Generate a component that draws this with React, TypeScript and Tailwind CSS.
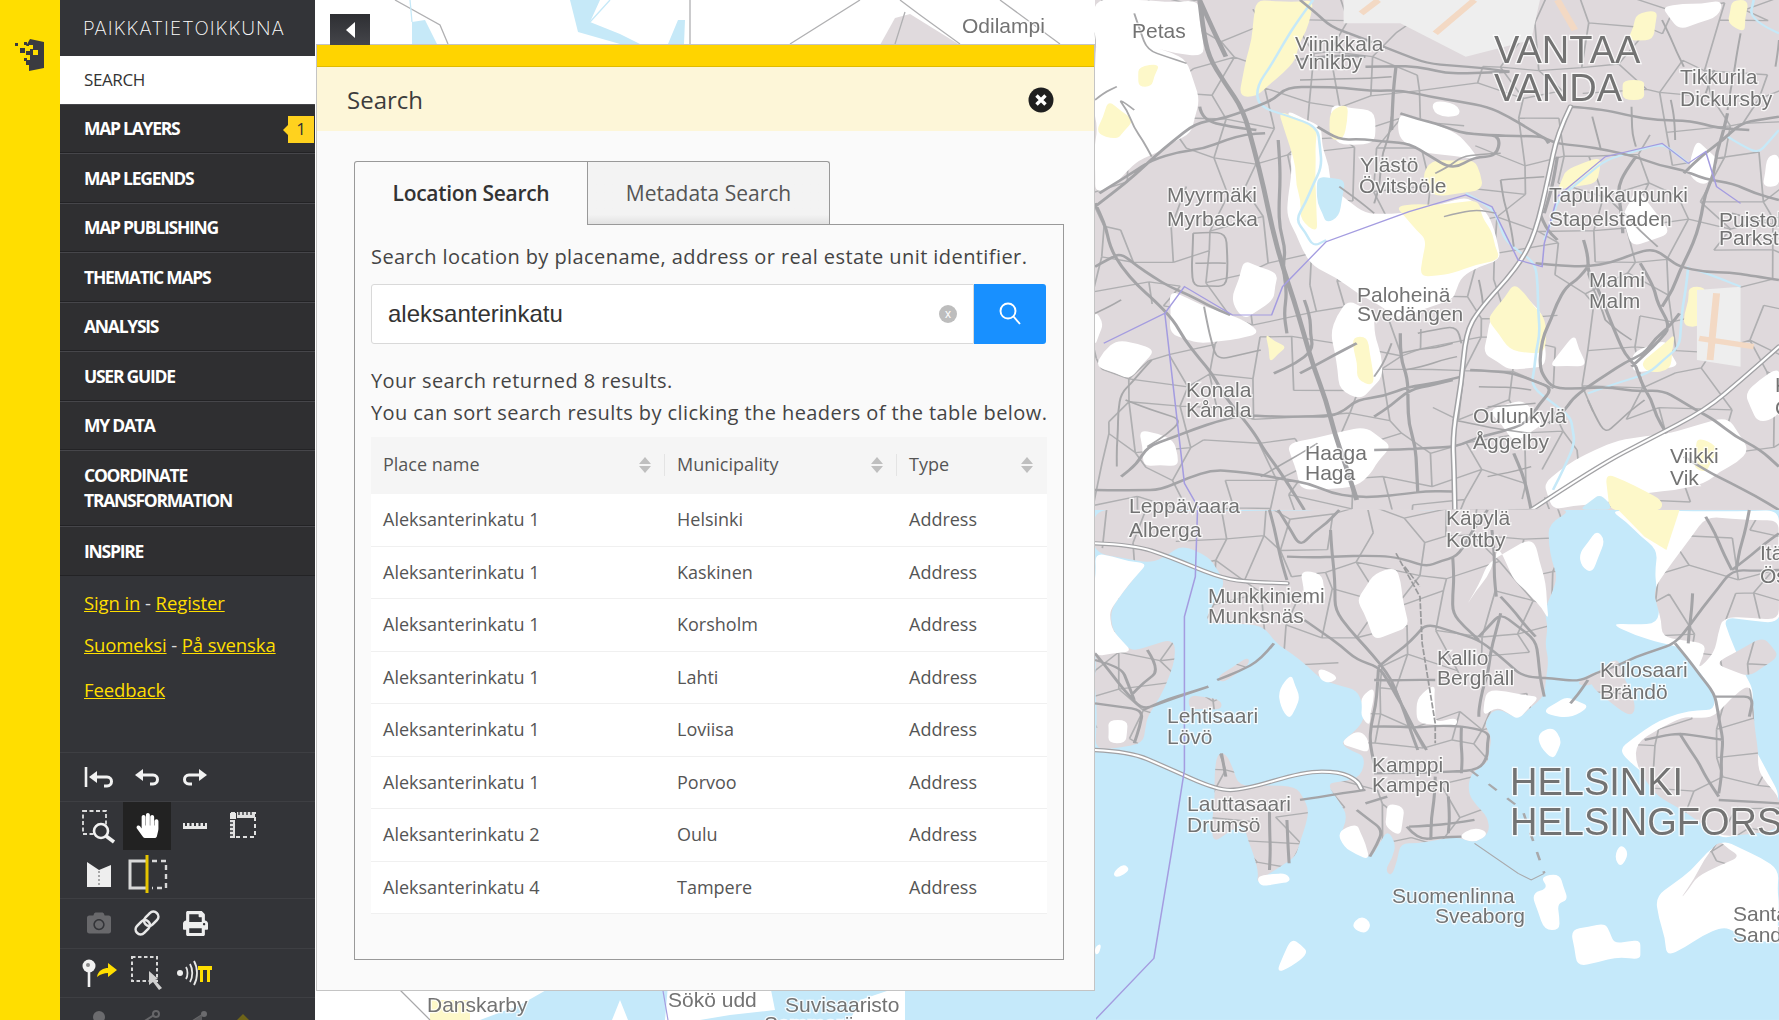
import { FaHandPaper, FaCamera, FaPrint } from "react-icons/fa";

const open = "font-['Open_Sans',sans-serif]";

const labels: [string, number, number, number?][] = [
  ["Odilampi", 962, 33], ["Danskarby", 427, 1012], ["Sökö udd", 668, 1007], ["Suvisaaristo", 785, 1012], ["Sommaröarna", 764, 1031],
  ["Petas", 1132, 38], ["Viinikkala", 1295, 51], ["Vinikby", 1295, 69], ["VANTAA", 1494, 63, 38], ["VANDA", 1494, 101, 38],
  ["Tikkurila", 1680, 84], ["Dickursby", 1680, 106], ["Ylästö", 1360, 172], ["Övitsböle", 1359, 193], ["Myyrmäki", 1167, 202], ["Myrbacka", 1167, 226],
  ["Tapulikaupunki", 1549, 202], ["Stapelstaden", 1549, 226], ["Puistola", 1719, 227], ["Parkstad", 1719, 245], ["Malmi", 1589, 287], ["Malm", 1589, 308],
  ["Paloheinä", 1357, 302], ["Svedängen", 1357, 321], ["Konala", 1186, 397], ["Kånala", 1186, 417], ["Oulunkylä", 1473, 423], ["Åggelby", 1473, 449],
  ["Haaga", 1305, 460], ["Haga", 1305, 480], ["Viikki", 1670, 463], ["Vik", 1670, 485], ["Leppävaara", 1129, 513], ["Alberga", 1129, 537],
  ["Käpylä", 1446, 525], ["Kottby", 1446, 547], ["Munkkiniemi", 1208, 603], ["Munksnäs", 1208, 623], ["Kallio", 1437, 665], ["Berghäll", 1437, 685],
  ["Kulosaari", 1600, 677], ["Brändö", 1600, 699], ["Lehtisaari", 1167, 723], ["Lövö", 1167, 744], ["Kamppi", 1372, 772], ["Kampen", 1372, 792],
  ["Lauttasaari", 1187, 811], ["Drumsö", 1187, 832], ["HELSINKI", 1510, 795, 38], ["HELSINGFORS", 1510, 835, 38], ["Suomenlinna", 1392, 903], ["Sveaborg", 1435, 923],
  ["Santa", 1733, 921], ["Sand", 1733, 942], ["Itä", 1760, 560], ["Ös", 1760, 583], ["K", 1775, 392], ["O", 1775, 415],
];

let seed = 12345;
const rnd = () => {
  seed = (seed + 0x6d2b79f5) | 0;
  let t = Math.imul(seed ^ (seed >>> 15), 1 | seed);
  t = (t + Math.imul(t ^ (t >>> 7), 61 | t)) ^ t;
  return ((t ^ (t >>> 14)) >>> 0) / 4294967296;
};
const f = (n: number) => n.toFixed(1);
function organic(d: string, amp = 7, step = 70) {
  return d
    .split(/(?=M)/)
    .filter((s) => s.trim())
    .map((sub) => {
      const closed = /Z\s*$/.test(sub);
      const nums = sub.match(/-?\d+(\.\d+)?/g)!.map(Number);
      const pts: [number, number][] = [];
      for (let i = 0; i + 1 < nums.length; i += 2) pts.push([nums[i], nums[i + 1]]);
      if (pts.length < 2) return "";
      const out: [number, number][] = [];
      const n = closed ? pts.length : pts.length - 1;
      for (let i = 0; i < n; i++) {
        const a = pts[i];
        const b = pts[(i + 1) % pts.length];
        out.push(a);
        const len = Math.hypot(b[0] - a[0], b[1] - a[1]);
        const k = Math.floor(len / step);
        for (let j = 1; j <= k; j++) {
          const u = j / (k + 1);
          out.push([a[0] + (b[0] - a[0]) * u + (rnd() - 0.5) * 2 * amp, a[1] + (b[1] - a[1]) * u + (rnd() - 0.5) * 2 * amp]);
        }
      }
      if (!closed) out.push(pts[pts.length - 1]);
      const mid = (p: [number, number], q: [number, number]) => `${f((p[0] + q[0]) / 2)},${f((p[1] + q[1]) / 2)}`;
      let s = "";
      if (closed) {
        s = `M${mid(out[out.length - 1], out[0])}`;
        out.forEach((p, i) => (s += ` Q${f(p[0])},${f(p[1])} ${mid(p, out[(i + 1) % out.length])}`));
        s += "Z";
      } else {
        s = `M${f(out[0][0])},${f(out[0][1])}`;
        for (let i = 1; i < out.length - 1; i++) s += ` Q${f(out[i][0])},${f(out[i][1])} ${mid(out[i], out[i + 1])}`;
        s += ` L${f(out[out.length - 1][0])},${f(out[out.length - 1][1])}`;
      }
      return s;
    })
    .join(" ");
}
function mesh(w: number, h: number, cx: number, cy: number, prob: number) {
  const cols = Math.ceil(w / cx) + 1;
  const rows = Math.ceil(h / cy) + 1;
  const p: [number, number][][] = [];
  for (let j = 0; j < rows; j++) {
    p.push([]);
    for (let i = 0; i < cols; i++) p[j].push([i * cx + (rnd() - 0.5) * cx * 0.8, j * cy + (rnd() - 0.5) * cy * 0.8]);
  }
  let d = "";
  for (let j = 0; j < rows; j++)
    for (let i = 0; i < cols; i++) {
      const a = p[j][i];
      if (i + 1 < cols && rnd() < prob) d += `M${f(a[0])},${f(a[1])} L${f(p[j][i + 1][0])},${f(p[j][i + 1][1])} `;
      if (j + 1 < rows && rnd() < prob) d += `M${f(a[0])},${f(a[1])} L${f(p[j + 1][i][0])},${f(p[j + 1][i][1])} `;
    }
  return d;
}

const Z5Roads = organic("M0,620 L230,370 L370,320 L440,262 L700,270 L900,320 L1050,430 L1240,470 L1568,600 M0,800 L60,760 L170,860 L310,945 M0,610 L60,800 L180,960 L330,1240 L480,1530 M240,320 L245,360 L370,390 M10,580 L130,480 L300,420 L390,400 M850,400 L1030,410 L1040,430 M700,340 L780,370 L850,400 L930,410 L920,470 L870,470 L820,510 L720,430 L560,420 L510,380 M690,200 L680,390 M620,200 L740,200 L820,220 L950,215 M460,180 L620,170 M1060,470 L1030,640 M1240,470 L1200,560 L1210,700 M1568,840 L1340,800 L1280,745 L1130,800 L1010,790 M1130,800 L1080,860 L1030,1000 L1020,1100 L1050,1165 L1300,1170 L1420,1260 L1568,1400 M840,1130 L600,1200 L540,1250 L340,1245 L120,1340 L60,1430 M860,1110 L960,1120 L1050,1165 L990,1270 L830,1340 L640,1350 M0,1470 L150,1470 L270,1410 L440,1440 L590,1490 L820,1475 M1340,940 L1260,1060 L1130,1160 L1040,1270 M1450,340 L1380,700 L1300,920 M1568,350 L1480,370 L1440,420 L1350,520 M1090,320 L1500,390 M420,420 L440,1000 M700,1000 L740,1480 M820,1140 L720,1170 L640,1250 M480,900 L500,1050 L410,1120 M470,1120 L600,1030 M1250,790 L1320,980 L1230,1100 M1120,720 L1130,820 L1200,1020 L1240,1100 M1240,1100 L1310,1300 M1020,640 L1060,720 M1350,1370 L1568,1530 M1000,1530 L960,1360");

const Z5Thin = organic("M700,1060 L820,1030 M710,1110 L830,1070 M740,1000 L830,980 L840,1030 M225,700 L300,700 L300,860 L225,860 L225,700 M230,790 L300,790 M130,1080 L60,1180 L50,1400 M250,920 L280,1080 L380,1050 M880,840 L890,920 M930,540 L960,740 M1180,600 L1290,740 M1170,960 L1130,820 M1170,960 L1230,1020 M680,1030 L640,1130 M800,650 L880,630 L920,640 M780,520 L840,470 L930,460 M930,540 L1030,530 M880,1160 L1000,1170 M900,1220 L1010,1210 M1130,1200 L1170,1300 L1260,1200 M1480,100 L1450,330 M1300,60 L1350,200 M1140,350 L1160,450 M1230,320 L1240,440 M1320,300 L1330,420 M560,560 L640,640 M1460,640 L1568,680 M1560,200 L1568,120 M1420,210 L1400,280 M70,1200 L200,1260 L120,1340 M380,1430 L510,1330 M900,1430 L1000,1400 M820,1260 L1000,1300 M0,300 L50,260 M90,40 L120,150 L210,190 M90,330 L50,290 L130,470 M0,940 L60,900 M680,350 L640,610 M470,240 L680,230", 5, 60);

const Z6Roads = organic("M0,430 L80,560 L110,600 L260,530 M0,580 L110,600 L90,700 M440,210 L400,0 M440,140 L680,140 L760,170 L830,140 L900,0 M540,60 L550,300 L620,410 L680,510 L740,720 M420,0 L470,110 L560,0 M480,330 L600,450 L650,470 L710,600 L760,720 M650,470 L630,700 L640,760 M650,470 L710,410 L760,340 L880,390 L980,500 L1110,515 L1240,440 L1330,400 L1460,180 L1568,180 M880,380 L930,310 L1010,390 L1030,560 M930,260 L1010,380 M820,140 L820,310 L880,390 M910,60 L920,260 M930,310 L880,600 L880,620 M640,510 L780,510 M630,650 L840,650 M840,650 L905,660 L900,740 L880,780 L640,790 M840,650 L840,790 M720,950 L870,930 M715,950 L740,990 L840,980 M780,800 L770,990 M810,860 L810,970 M620,880 L670,860 M600,900 L660,960 L630,1040 M470,870 L620,840 M1330,400 L1420,550 L1440,690 L1430,850 M1360,400 L1370,250 M1420,560 L1510,560 L1500,620 M1460,180 L1400,20 M1460,180 L1568,70 M1260,690 L1340,670 L1440,690 M1340,670 L1400,800 L1430,860 M1430,870 L1568,880 M1130,510 L1090,580 M410,400 L380,450 L280,510 M110,600 L160,570 L260,530 M0,450 L60,470 L90,570 M120,420 L150,480 L80,560 M400,900 L400,1080 M440,930 L445,1060 M290,730 L300,800 M1500,0 L1470,180", 4, 70);

const z5White = organic("M0,0 L240,0 L250,170 L130,140 L210,180 L240,300 L220,400 L100,480 L40,560 L0,580Z M440,330 L520,380 L540,560 L620,640 L700,640 L850,590 L900,640 L930,780 L840,830 L820,900 L700,960 L600,880 L500,800 L440,650 L460,400Z M540,310 L640,330 L640,430 L550,430Z M700,340 L830,400 L880,480 L760,460 L700,420Z M170,870 L300,940 L380,1000 L240,1030 L170,1000Z M340,780 L420,820 L410,900 L340,960 L310,900Z M50,1020 L140,1050 L80,1140 L0,1100Z M440,1330 L620,1280 L680,1340 L600,1460 L470,1470Z M580,900 L640,940 L660,1130 L610,1200 L560,1170 L540,1000Z M1100,1380 L1200,1320 L1320,1300 L1450,1250 L1500,1350 L1400,1450 L1200,1500 L1050,1530 L1030,1450Z M905,960 L960,860 L1030,950 L1030,1100 L950,1110 L890,1060Z M100,1290 L180,1320 L190,1400 L110,1400Z M1240,560 L1320,700 L1230,740 L1210,640Z M0,930 L20,970 L0,1040Z M900,1230 L980,1200 L1030,1270 L960,1330Z M770,300 L830,310 L840,350 L780,350Z M1300,20 L1440,0 L1430,50 L1340,90Z M1380,420 L1430,480 L1400,560 L1360,530Z M1540,470 L1568,460 L1568,560 L1530,560Z M1100,1000 L1130,1100 L1040,1100Z M1230,1060 L1310,1020 L1340,1100 L1230,1120Z M1490,1180 L1568,1100 L1568,1250 L1520,1270Z");
const z5Yellow = organic("M420,330 L510,380 L510,700 L470,660 L460,500Z M690,620 L880,600 L930,780 L820,820 L745,830 L760,720Z M370,0 L500,0 L460,180 L370,290 L330,290Z M1080,510 L1160,470 L1150,550 L1060,570Z M900,960 L960,850 L1030,950 L1030,1060 L950,1050Z M770,480 L870,480 L890,570 L780,590 L750,530Z M540,330 L580,310 L570,420 L540,420Z M0,400 L30,300 L90,360 L50,420Z M100,200 L150,190 L130,260 L100,260Z M1170,1420 L1300,1500 L1300,1530 L1180,1530Z M1380,1310 L1430,1340 L1400,1420 L1370,1400Z M1360,860 L1400,860 L1390,980 L1350,980Z M1250,1090 L1330,1000 L1320,1110 L1270,1120Z M1460,0 L1500,0 L1490,100 L1450,70Z M390,1000 L440,1040 L400,1090Z M1240,40 L1290,30 L1280,120 L1220,120Z M1210,240 L1260,240 L1260,300 L1210,300Z M590,1010 L625,1010 L640,1160 L600,1140Z", 6, 60);
const z5Rivers = organic("M500,0 L370,260 L375,320 L510,380 L520,500 L460,660 L500,740 L530,720 M850,580 L910,620 L940,720 L1010,790 L1020,1000 L1000,1160 L1090,1250 L1100,1330 L1050,1470 M1030,720 L1060,600 L1170,480 L1300,430 L1360,490 M1568,100 L1500,60 L1510,0 M1360,800 L1340,1040 L1270,1120 L1130,1180 M1380,810 L1480,860 M1568,390 L1520,460 L1450,410", 3, 80);
const z5Lake = organic("M510,530 L575,540 L560,650 L530,670 L510,610Z M1110,1530 L1160,1480 L1190,1530Z", 2, 60);
const z5Mesh = mesh(1568, 1530, 95, 95, 0.72);

const z6EastBase = organic("M1180,0 L1568,0 L1568,340 L1440,320 L1510,540 L1490,650 L1568,850 L1568,920 L1440,990 L1300,850 L1200,720 L1260,660 L1340,610 L1420,600 L1420,550 L1340,410 L1300,400 L1180,340 L1290,340 L1290,120Z M1285,1160 L1440,990 L1568,1080 L1568,1300 L1500,1290 L1440,1250 L1310,1340Z", 6, 70);
const z6Pink = organic("M0,0 L1095,0 L1040,40 L1040,100 L1060,200 L1030,300 L1040,450 L1030,560 L970,630 L920,590 L890,640 L910,680 L900,760 L860,790 L855,850 L900,920 L905,970 L870,1000 L830,980 L740,1000 L700,1000 L680,1100 L665,1080 L690,1000 L670,960 L630,1050 L560,980 L580,920 L530,820 L610,800 L620,740 L560,700 L600,660 L620,620 L600,540 L520,510 L450,430 L415,400 L385,345 L250,340 L300,220 L260,140 L200,105 L130,160 L0,130Z M0,130 L100,190 L35,300 L40,360 L85,425 L180,385 L185,440 L150,560 L120,620 L110,700 L0,720Z M215,555 L290,570 L290,600 L215,600Z M280,500 L350,440 L355,460 L290,520Z M280,730 L300,730 L330,830 L460,830 L490,900 L460,1040 L400,1090 L370,1120 L375,1090 L340,940 L270,1000Z M1280,240 L1400,20 L1568,30 L1568,330 L1440,320 L1420,430 L1380,480 L1400,400 L1300,380Z M1240,700 L1350,620 L1420,620 L1500,520 L1510,620 L1520,780 L1568,860 L1568,960 L1430,980 L1290,860 L1240,760Z M1340,1170 L1430,990 L1480,1040 L1380,1100Z M1420,460 L1530,380 L1568,440 L1500,500Z M1155,480 L1200,440 L1240,600 L1225,620 L1130,520Z M1100,520 L1150,480 L1180,500 L1130,530Z", 5, 70);
const z6White = organic("M0,130 L120,160 L100,190 L35,300 L40,360 L85,425 L0,440Z M560,700 L600,660 L625,680 L630,730Z M30,630 L75,630 L70,700 L30,700Z M470,180 L520,190 L530,280 L480,280Z M640,190 L690,170 L720,350 L640,390 L600,270Z M850,290 L900,200 L925,110 L960,210 L1000,260 L1040,330 L1030,200 L1010,100 L990,90 L900,160Z M740,560 L780,520 L780,640 L830,620 L830,650 L740,640Z M610,560 L640,530 L630,650 L610,620Z M900,540 L1020,560 L970,630 L920,590 L890,620Z M670,880 L710,890 L700,980 L665,950Z M555,965 L600,940 L620,1000 L630,1050 L570,1010Z M830,980 L870,950 L905,970 L870,1000Z M370,1100 L440,1090 L450,1115 L380,1130Z M510,470 L560,500 L540,520 L515,510Z", 4, 60);
const z6Islands = organic("M420,540 L450,490 L470,560 L445,630 L425,590Z M1030,600 L1080,560 L1135,590 L1090,625 L1040,615Z M1015,670 L1050,650 L1070,690 L1050,750 L1020,710Z M1190,1040 L1205,1000 L1225,1030 L1205,1075Z M1110,130 L1150,60 L1170,90 L1140,190 L1115,170Z M40,1090 L65,1060 L82,1080 L50,1105Z M585,1250 L610,1215 L635,1240 L620,1275Z M415,1390 L450,1285 L490,1330 L450,1370Z M1090,1260 L1170,1240 L1190,1300 L1250,1290 L1250,1350 L1200,1340 L1105,1370Z M1020,1100 L1065,1090 L1085,1170 L1060,1180 L1065,1260 L1030,1260 L1000,1150 L1040,1135Z M0,1310 L15,1300 L10,1330 L0,1335Z", 3, 60);
const z6Mesh = mesh(1568, 1300, 90, 90, 0.72);

function Road({ d }: { d: string }) {
  return (
    <>
      <path d={d} fill="none" stroke="#a2a2a5" strokeWidth="13" strokeLinejoin="round" strokeLinecap="round" />
      <path d={d} fill="none" stroke="#fff" strokeWidth="6" strokeLinejoin="round" strokeLinecap="round" />
    </>
  );
}

const R1 = organic("M240,0 L260,170 L340,330 L430,800 L600,1500 M240,0 L300,170", 3, 120);
const R2 = organic("M470,0 L540,80 L760,190 L950,215", 3, 80);
const M1 = organic("M1090,320 L1060,400 L1040,530 L1010,700 L970,800 L880,930 L850,1000 L840,1150 L820,1300 L825,1530", 1, 200);
const M2 = organic("M1000,1530 L1150,1400 L1400,1230 L1568,1040", 1, 200);
const M3 = organic("M0,100 L90,105 L170,140 L280,200 L340,215 L440,220", 1, 200);
const M4 = organic("M0,720 L80,725 L160,770 L280,840 L340,840 L480,785 L560,785 L600,810 L610,835", 1, 200);

function MapArt() {
  return (
    <svg className="absolute inset-0 blur-[0.5px]" width="1779" height="1020" viewBox="0 0 1779 1020">
      <defs>
        <clipPath id="land6"><path d={z6Pink} /></clipPath>
      </defs>
      <rect width="1779" height="1020" fill="#fff" />
      <g fill="#c6e9f8">
        <path d="M412,22 L425,20 L437,44 L412,44Z M570,0 L600,0 L590,22 L620,34 L640,44 L620,44 L578,32Z M668,44 L678,20 L685,20 L684,44Z" />
      </g>
      <path d="M880,45 L895,18 L910,14 L960,45Z" fill="#e0dadd" />
      <path d="M395,0 L440,25 L448,44 M900,0 L920,15 L960,44 M790,44 L860,0 M690,44 L690,0 M905,12 L895,44 M1000,0 L1060,44" fill="none" stroke="#b0b0b2" strokeWidth="1.3" />
      <path d="M410,0 L412,22 M610,0 L590,22" fill="none" stroke="#c6e9f8" strokeWidth="1.3" />
      <g transform="translate(1095,0) scale(0.4362,0.3333)">
        <rect width="1568" height="1530" fill="#dfd9dc" />
        <path d={z5Mesh} fill="none" stroke="#afafb1" strokeWidth="4" />
        <path d={z5White} fill="#fff" />
        <path d={z5Yellow} fill="#fdf8c9" />
        <path d="M570,0 L1020,0 L1000,120 L850,170 L700,70 L570,70Z M1380,870 L1480,860 L1480,1100 L1380,1080Z" fill="#eeeeee" />
        <path d="M610,40 L650,0 M780,100 L870,0 M1060,0 L1100,90 M1425,880 L1410,1080 M1385,1015 L1510,1040" stroke="#f3d9c4" strokeWidth="16" fill="none" />
        <path d={z5Lake} fill="#c6e9f8" />
        <path d={z5Rivers} fill="none" stroke="#c6e9f8" strokeWidth="6" />
        <path d={Z5Thin} fill="none" stroke="#a8a8aa" strokeWidth="4.5" />
        <path d={Z5Roads} fill="none" stroke="#a4a4a7" strokeWidth="7.5" strokeLinejoin="round" />
        <path d={R1} fill="none" stroke="#a2a2a5" strokeWidth="11" strokeLinejoin="round" />
        <path d={R2} fill="none" stroke="#a4a4a7" strokeWidth="7" />
        <Road d={M1} />
        <Road d={M2} />
        <path d="M20,1030 L160,940 L205,860 L315,945 L405,945 L430,860 L530,725 L720,635 L850,585 L910,620 L970,780 L1025,800 L1030,730 L1060,590 L1170,470 L1300,430 L1360,490 L1400,455 L1425,560 L1480,610 M160,940 L205,1450 L240,1530" fill="none" stroke="#a49ce0" strokeWidth="3.5" />
      </g>
      <g transform="translate(1095,510) scale(0.4362,0.3333)">
        <rect width="1568" height="1530" fill="#c5e9fa" />
        <path d={z6EastBase} fill="#fff" />
        <path d={z6Pink} fill="#dfd9dc" />
        <g clipPath="url(#land6)">
          <path d={z6Mesh} fill="none" stroke="#afafb1" strokeWidth="4" />
        </g>
        <path d={z6White} fill="#fff" />
        <path d={z6Islands} fill="#fff" />
        <path d="M1200,0 L1340,0 L1310,120 L1260,80Z" fill="#fdf8c9" />
        <path d={Z6Roads} fill="none" stroke="#a4a4a7" strokeWidth="7" strokeLinejoin="round" />
        <path d="M860,780 L980,900 L1030,1090" fill="none" stroke="#a9a9ab" strokeWidth="6" strokeDasharray="26 34" />
        <path d="M870,1000 L970,1090 L1000,1110 L1030,1090" fill="none" stroke="#a9a9ab" strokeWidth="3" />
        <path d="M690,130 L745,260 L750,400 L780,640 L780,700 M710,170 L745,230" fill="none" stroke="#9a9a9c" strokeWidth="4" strokeDasharray="18 5" />
        <Road d={M3} />
        <Road d={M4} />
        <path d="M235,0 L230,200 L205,320 L205,780 L175,1030 L135,1345 L0,1530" fill="none" stroke="#a49ce0" strokeWidth="3.5" />
      </g>
      <rect x="316" y="985" width="780" height="35" fill="#c5e9fa" />
      <path d="M316,985 L555,985 L520,1005 L480,1020 L316,1020Z M612,1020 L620,1000 L628,1020Z M665,1020 L668,985 L730,985 L770,985 L775,1010 L730,1015 L700,1020Z M860,1000 L905,985 L905,1020 L850,1020Z" fill="#fff" />
      <path d="M430,1000 L470,1000 L470,1020 L430,1020Z" fill="#fdf8c9" />
      <path d="M395,985 L430,1020" stroke="#a8a8aa" strokeWidth="1.2" fill="none" />
      <path d="M662,985 L668,1020" stroke="#a49ce0" strokeWidth="1.2" fill="none" />
      <g fontFamily="'Liberation Sans',sans-serif" fill="#737373" stroke="#ffffff" strokeWidth="2.5" strokeOpacity="0.8" style={{ paintOrder: "stroke" }}>
        {labels.map(([t, x, y, s]) => (
          <text key={t + x} x={x} y={y} fontSize={s ?? 21}>{t}</text>
        ))}
      </g>
    </svg>
  );
}

const Ic = ({ children, w = 34, h = 34 }: { children: React.ReactNode; w?: number; h?: number }) => (
  <svg width={w} height={h} viewBox={`0 0 ${w} ${h}`} fill="none">{children}</svg>
);

const ArrowBack = ({ flip }: { flip?: boolean }) => (
  <g transform={flip ? "translate(34,0) scale(-1,1)" : undefined}>
    <path d="M5,15 L13,9 L13,21Z" fill="#f2f2f2" />
    <path d="M12,15 H23 C29,15 29,24 23,24 H20" stroke="#f2f2f2" strokeWidth="3" />
  </g>
);

const IconUndoAll = () => (
  <Ic>
    <path d="M4,7 V27" stroke="#f2f2f2" strokeWidth="2.6" />
    <g transform="translate(2,2)"><ArrowBack /></g>
  </Ic>
);
const IconZoom = () => (
  <Ic w={38} h={38}>
    <rect x="3" y="4" width="23" height="23" stroke="#ddd" strokeWidth="1.8" strokeDasharray="4 2.5" />
    <circle cx="21" cy="24" r="7" stroke="#f2f2f2" strokeWidth="2.6" fill="#333438" />
    <path d="M26,29 L34,35" stroke="#f2f2f2" strokeWidth="3.6" />
  </Ic>
);
const IconRuler = () => (
  <Ic>
    <path d="M5,14 H7 V17 H9 V14 H11.5 V17 H13.5 V14 H16 V17 H18 V14 H20.5 V17 H22.5 V14 H25 V17 H27 V14 H29 V20 H5Z" fill="#e8e8e8" />
  </Ic>
);
const IconArea = () => (
  <Ic>
    <rect x="5" y="4" width="24" height="24" stroke="#e0e0e0" strokeWidth="2" strokeDasharray="4 3" />
    <rect x="4" y="4" width="6" height="6" fill="#e8e8e8" />
    <path d="M11,3 H29 V9 H11Z M4,11 H9 V29 H4Z" fill="#e0e0e0" />
    <path d="M13,3 V6 M17,3 V6 M21,3 V6 M25,3 V6 M4,14 H7 M4,18 H7 M4,22 H7 M4,26 H7" stroke="#333438" strokeWidth="1.4" />
  </Ic>
);
const IconMap = () => (
  <Ic>
    <path d="M5,5 L17,13 L29,8 V30 H5Z" fill="#eee" />
    <path d="M17,14 V30" stroke="#777" strokeWidth="1.2" strokeDasharray="2 2" />
  </Ic>
);
const IconSplit = () => (
  <Ic w={44} h={42}>
    <path d="M21,8 H5 V35 H21" stroke="#d8d8d8" strokeWidth="3" fill="none" />
    <path d="M27,8 H41 V35 H27" stroke="#d8d8d8" strokeWidth="2.4" strokeDasharray="5 4" />
    <path d="M22,2 V40" stroke="#e5c400" strokeWidth="3" />
  </Ic>
);
const IconLink = () => (
  <Ic>
    <g transform="rotate(-45 17 17)" stroke="#e8e8e8" strokeWidth="2.6">
      <rect x="3" y="12" width="16" height="10" rx="5" />
      <rect x="15" y="12" width="16" height="10" rx="5" />
    </g>
  </Ic>
);
const IconPin = () => (
  <Ic w={38} h={34}>
    <circle cx="9" cy="10" r="6.5" fill="#f2f2f2" />
    <circle cx="8" cy="9" r="2" fill="#888" />
    <path d="M9,15 V31" stroke="#f2f2f2" strokeWidth="2.6" />
    <path d="M17,21 C18,14 24,12 28,12 V7 L37,14 L28,21 V17 C24,17 21,18 17,21Z" fill="#ffde00" />
  </Ic>
);
const IconSelect = () => (
  <Ic w={36} h={38}>
    <rect x="3" y="3" width="25" height="24" stroke="#d8d8d8" strokeWidth="2" strokeDasharray="3.5 2.5" />
    <path d="M20,17 L29,25 L26,26 L33,34 L30,36 L24,28 L20,31Z" fill="#d0d0d0" />
  </Ic>
);
const IconSignal = () => (
  <Ic w={40} h={34}>
    <circle cx="5" cy="17" r="3" fill="#eee" />
    <path d="M11,11 C13,14 13,20 11,23 M15,8 C18,13 18,21 15,26 M19,5 C23,12 23,22 19,29" stroke="#e8e8e8" strokeWidth="1.8" fill="none" />
    <path d="M23,10 H37 V14 H35 V26 H32 V14 H28 V26 H25 V14 H23Z" fill="#ffde00" />
  </Ic>
);
const Dim = ({ kind }: { kind: number }) => (
  <Ic h={22}>
    {kind === 0 && <g><circle cx="17" cy="9" r="6" fill="#6b6b6e" /><path d="M17,14 V22" stroke="#6b6b6e" strokeWidth="3" /></g>}
    {kind === 1 && <g><path d="M7,18 L24,7" stroke="#666669" strokeWidth="2" /><circle cx="6" cy="18" r="3" stroke="#666669" strokeWidth="2" /><circle cx="26" cy="6" r="3" stroke="#666669" strokeWidth="2" /></g>}
    {kind === 2 && <g><path d="M7,18 L24,7" stroke="#666669" strokeWidth="2" /><path d="M7,18 L24,7 L24,18Z" fill="#5a5a5d" /><circle cx="26" cy="6" r="3" fill="#6b6b6e" /></g>}
    {kind === 3 && <path d="M17,6 L25,14 H21 V22 H13 V14 H9Z" fill="#6e6418" />}
  </Ic>
);

function Cell({ children, active }: { children?: React.ReactNode; active?: boolean }) {
  return <div className={`flex h-[48px] w-[48px] items-center justify-center ${active ? "bg-[#222222]" : ""}`}>{children}</div>;
}

function Row({ children, className = "" }: { children: React.ReactNode; className?: string }) {
  return <div className={`flex shrink-0 border-t border-[#3e3f43] pl-[15px] ${className}`}>{children}</div>;
}

const nav = ["MAP LEGENDS", "MAP PUBLISHING", "THEMATIC MAPS", "ANALYSIS", "USER GUIDE", "MY DATA"];

function NavRow({ children, className = "" }: { children: React.ReactNode; className?: string }) {
  return (
    <div className={`relative flex shrink-0 items-center border-t border-[#46464a] border-b border-b-[#232325] bg-[#2f2f31] pl-[24px] text-[17.5px] font-bold tracking-[-1.25px] text-white ${className}`}>
      {children}
    </div>
  );
}

function Sidebar() {
  return (
    <div className={`flex h-full w-[255px] shrink-0 flex-col overflow-hidden bg-[#333438] ${open}`}>
      <div className="flex h-[56px] shrink-0 items-center pl-[23px] pt-[2px] font-['Inter',sans-serif] text-[19px] font-extralight tracking-[1px] text-white">PAIKKATIETOIKKUNA</div>
      <div className="flex h-[47.5px] shrink-0 items-center bg-white pl-[24px] text-[17px] tracking-[-0.4px] text-[#333]">SEARCH</div>
      <NavRow className="h-[49.5px]">
        MAP LAYERS
        <span className="absolute right-[1px] top-[11px] flex h-[27px] w-[26px] items-center justify-center bg-[#ffd21e] text-[17px] font-normal tracking-normal text-[#333]">
          <span className="absolute left-[-5px] top-[9px] border-y-[5px] border-r-[5px] border-y-transparent border-r-[#ffd21e]" />1
        </span>
      </NavRow>
      {nav.map((n) => (
        <NavRow key={n} className="h-[49.5px]">{n}</NavRow>
      ))}
      <NavRow className="h-[76px] leading-[25px]">
        <span>COORDINATE<br />TRANSFORMATION</span>
      </NavRow>
      <NavRow className="h-[49.5px]">INSPIRE</NavRow>
      <div className="shrink-0 pl-[24px] pt-[14px] text-[18.5px] tracking-[-0.1px] text-[#ddd]">
        <div className="h-[42px] leading-[26px]"><a className="text-[#ffde00] underline">Sign in</a> - <a className="text-[#ffde00] underline">Register</a></div>
        <div className="h-[45px] leading-[26px]"><a className="text-[#ffde00] underline">Suomeksi</a> - <a className="text-[#ffde00] underline">På svenska</a></div>
        <div className="leading-[26px]"><a className="text-[#ffde00] underline">Feedback</a></div>
      </div>
      <div className="mt-[49px] shrink-0">
        <Row className="h-[49px] items-center">
          <Cell><IconUndoAll /></Cell>
          <Cell><Ic><ArrowBack /></Ic></Cell>
          <Cell><Ic><ArrowBack flip /></Ic></Cell>
        </Row>
        <Row className="h-[97px] flex-wrap content-start pr-[40px]">
          <Cell><IconZoom /></Cell>
          <Cell active><FaHandPaper size={25} color="#fff" /></Cell>
          <Cell><IconRuler /></Cell>
          <Cell><IconArea /></Cell>
          <Cell><IconMap /></Cell>
          <Cell><IconSplit /></Cell>
        </Row>
        <Row className="h-[50px] items-center">
          <Cell><FaCamera size={24} color="#68686b" /></Cell>
          <Cell><IconLink /></Cell>
          <Cell><FaPrint size={25} color="#eeeeee" /></Cell>
        </Row>
        <Row className="h-[49px] items-center">
          <Cell><IconPin /></Cell>
          <Cell><IconSelect /></Cell>
          <Cell><IconSignal /></Cell>
        </Row>
        <Row className="h-[40px] pt-[10px]">
          {[0, 1, 2, 3].map((k) => (
            <div key={k} className="flex w-[48px] justify-center"><Dim kind={k} /></div>
          ))}
        </Row>
      </div>
    </div>
  );
}

const rows = [["Helsinki", 1], ["Kaskinen", 1], ["Korsholm", 1], ["Lahti", 1], ["Loviisa", 1], ["Porvoo", 1], ["Oulu", 2], ["Tampere", 4]] as const;

const Sort = () => (
  <span className="flex flex-col items-center gap-[2px]">
    <span className="border-x-[6px] border-b-[7px] border-x-transparent border-b-[#bfbfbf]" />
    <span className="border-x-[6px] border-t-[7px] border-x-transparent border-t-[#bfbfbf]" />
  </span>
);

function HeadCell({ label, sep, pr }: { label: string; sep?: boolean; pr: string }) {
  return (
    <div className={`relative flex items-center justify-between pl-[12px] ${pr}`}>
      {label}
      <Sort />
      {sep && <span className="absolute right-0 top-[17px] h-[22px] w-px bg-[#e4e4e4]" />}
    </div>
  );
}

function Panel() {
  return (
    <div className={`relative mt-[44px] h-[947px] w-[779px] border border-[#c4c4c4] bg-[#fafafa] text-[#444] ${open}`}>
      <div className="h-[22px] border-b border-[#e0bb00] bg-[#ffd400]" />
      <div className="flex h-[64px] items-center justify-between bg-[#fdf6d8] pl-[30px] pr-[40px] pt-[2px] text-[24px] text-[#3c3c3c]">
        Search
        <svg width="26" height="26" viewBox="0 0 26 26">
          <circle cx="13" cy="13" r="12.5" fill="#1f1f1f" />
          <path d="M8.5,8.5 L17.5,17.5 M17.5,8.5 L8.5,17.5" stroke="#fff" strokeWidth="3.4" />
        </svg>
      </div>
      <div className="px-[37px] pt-[30px]">
        <div className="flex">
          <div className="z-10 -mb-px flex h-[64px] w-[234px] items-center justify-center rounded-tl-[3px] border border-b-0 border-[#999] bg-[#fafafa] text-[21px] font-semibold tracking-[-0.3px] text-[#333]">Location Search</div>
          <div className="flex h-[63px] w-[242px] items-center justify-center rounded-tr-[3px] border border-l-0 border-[#999] border-b-0 bg-gradient-to-b from-[#f3f3f3] from-85% to-[#e2e2e2] pt-[2px] text-[21px] font-normal text-[#555]">Metadata Search</div>
        </div>
        <div className="h-[736px] w-[710px] border border-[#999] px-[16px] pt-[17px]">
          <div className="whitespace-nowrap text-[20px] leading-[30px] tracking-[0.42px]">Search location by placename, address or real estate unit identifier.</div>
          <div className="mt-[12px] flex h-[60px] w-[675px]">
            <div className="flex flex-1 items-center justify-between rounded-l-[3px] border border-[#d9d9d9] bg-white pl-[16px] pr-[16px] font-['Liberation_Sans',sans-serif] text-[24px] text-[#333]">
              aleksanterinkatu
              <span className="flex h-[18px] w-[18px] items-center justify-center rounded-full bg-[#bdbdbd] text-[12px] leading-none text-white">x</span>
            </div>
            <div className="flex w-[72px] items-center justify-center rounded-r-[3px] bg-[#1890ff] text-white">
              <svg width="26" height="26" viewBox="0 0 26 26" fill="none" stroke="#fff" strokeWidth="1.9"><circle cx="11" cy="10" r="7.5" /><path d="M16.5,15.5 L23,23" /></svg>
            </div>
          </div>
          <div className="mt-[21px] whitespace-nowrap text-[20px] leading-[32px] tracking-[0.42px]">
            <div>Your search returned 8 results.</div>
            <div>You can sort search results by clicking the headers of the table below.</div>
          </div>
          <div className="mt-[8px] w-[676px] text-[18px] text-[#555]">
            <div className="grid h-[57px] grid-cols-[294px_232px_150px] bg-[#f5f5f5] pb-[2px]">
              <HeadCell label="Place name" sep pr="pr-[14px]" />
              <HeadCell label="Municipality" sep pr="pr-[14px]" />
              <HeadCell label="Type" pr="pr-[14px]" />
            </div>
            {rows.map(([m, n]) => (
              <div key={m} className="grid h-[52.5px] grid-cols-[294px_232px_150px] items-center border-b border-[#f0f0f0] bg-white">
                <div className="pl-[12px]">Aleksanterinkatu {n}</div>
                <div className="pl-[12px]">{m}</div>
                <div className="pl-[12px]">Address</div>
              </div>
            ))}
          </div>
        </div>
      </div>
      <div className="absolute left-[13px] top-[-31px] flex h-[31px] w-[40px] items-center justify-center bg-gradient-to-b from-[#2e2f33] to-[#44454a]">
        <span className="border-y-[8px] border-r-[9px] border-y-transparent border-r-white" />
      </div>
    </div>
  );
}

export default function App() {
  return (
    <div className="relative flex h-[1020px] w-[1779px] overflow-hidden">
      <MapArt />
      <div className="relative flex h-full w-[60px] shrink-0 justify-center bg-[#ffde00] pt-[37px]">
        <svg width="32" height="36" viewBox="0 0 32 36">
          <path d="M16,2 L30,5 V31 L15,34 V28 H12 V23 H16 V18 H12 V14 H16 V9 H12Z" fill="#3a3b40" />
          <path d="M19,13 H24 V18 H19Z M15,8 H19 V12 H15Z" fill="#ffde00" />
          <path d="M1,6 H4 V9 H1Z M6,11 H11 V16 H6Z M10,5 H13 V8 H10Z M10,21 H13 V24 H10Z" fill="#3a3b40" />
        </svg>
      </div>
      <div className="relative"><Sidebar /></div>
      <div className="relative ml-[1px]"><Panel /></div>
    </div>
  );
}
